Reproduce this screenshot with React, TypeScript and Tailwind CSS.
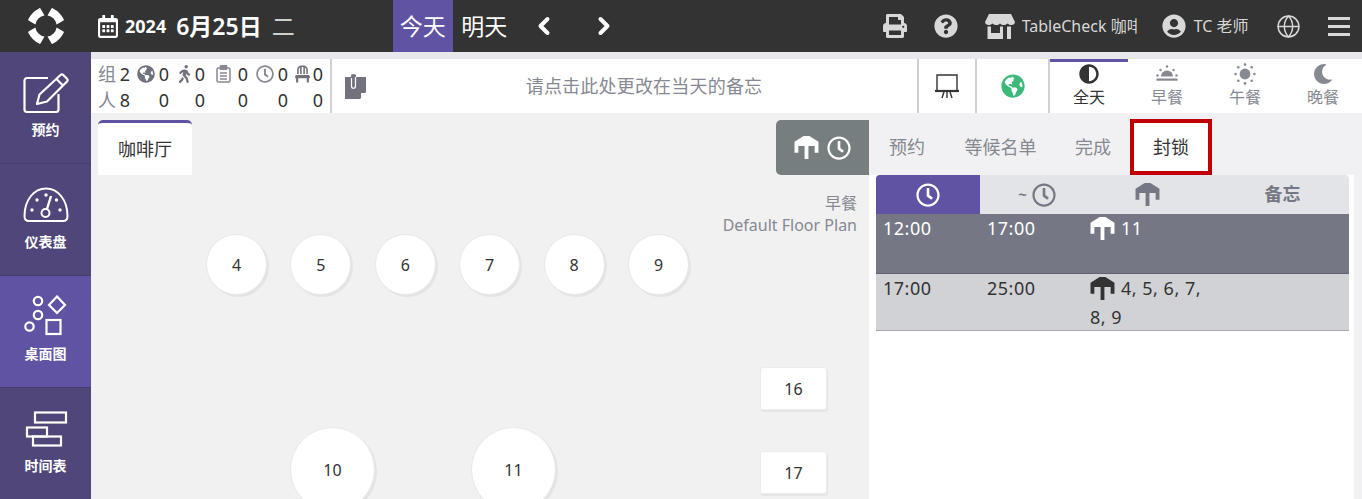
import { FaPrint, FaQuestionCircle, FaUserCircle, FaGlobeAmericas, FaWalking, FaChair, FaRegClock, FaMoon, FaAdjust, FaRegCalendarAlt } from "react-icons/fa";
import { FiGlobe, FiChevronLeft, FiChevronRight } from "react-icons/fi";

const font = { fontFamily: '"Noto Sans", "Noto Sans CJK SC", sans-serif' };

function Logo() {
  const seg = "M13.5 1.5 L17.5 8.4 A10.8 10.8 0 0 0 8.4 17.5 L1.5 13.5 Q0.8 13 1.4 12 Q5 5 12 1.4 Q13 0.8 13.5 1.5 Z";
  return (
    <svg width="38" height="38" viewBox="0 0 38 38" fill="#fff">
      <path d={seg} />
      <path d={seg} transform="translate(38 0) scale(-1 1)" />
      <path d={seg} transform="translate(0 38) scale(1 -1)" />
      <path d={seg} transform="translate(38 38) scale(-1 -1)" />
    </svg>
  );
}

function TableIcon({ className }: { className: string }) {
  return (
    <svg viewBox="0 0 26 24" className={className} fill="currentColor">
      <path d="M10 0 H16 L25.5 6 V17.5 H21.5 V10.5 H15 V24 H11 V10.5 H4.5 V17.5 H0.5 V6 Z" />
    </svg>
  );
}

function StoreIcon() {
  return (
    <svg width="30" height="25" viewBox="0 0 30 25" fill="#d8d8d8">
      <path d="M4 0 H26 L30 8 C30 10 28 11 26.5 11 C25 11 24 10.5 22.5 9.5 C21 10.5 20 11 18.7 11 C17.4 11 16 10.5 15 9.5 C14 10.5 12.6 11 11.3 11 C10 11 9 10.5 7.5 9.5 C6 10.5 5 11 3.5 11 C2 11 0 10 0 8 Z" />
      <path d="M2.5 12.5 H6 V19 H15 V12.5 H18 V25 H2.5 Z M22 12.5 H26 V25 H22 Z" />
    </svg>
  );
}

function EditIconNav() {
  return (
    <svg width="46" height="41" viewBox="0 0 46 41" fill="none" stroke="#fff" strokeWidth="2.2" strokeLinejoin="round">
      <path d="M25 5 H4 a2.5 2.5 0 0 0 -2.5 2.5 V36.5 a2.5 2.5 0 0 0 2.5 2.5 H33 a2.5 2.5 0 0 0 2.5 -2.5 V21" />
      <path d="M37.5 2 a2 2 0 0 1 2.8 0 L44 5.8 a2 2 0 0 1 0 2.8 L24 28.5 L14 31 L16.5 21.5 Z" />
      <path d="M33.5 6 L40 12.5" />
    </svg>
  );
}

function GaugeIcon() {
  return (
    <svg width="46" height="36" viewBox="0 0 46 36" fill="none" stroke="#fff" strokeWidth="2">
      <path d="M6 34 C3 34 1.5 32 1.5 29 C1.5 13 11 1.5 23 1.5 C35 1.5 44.5 13 44.5 29 C44.5 32 43 34 40 34 H6 Z" />
      <circle cx="22.5" cy="26" r="4" />
      <path d="M24 22 L28 9" strokeWidth="2.4" />
      <g fill="#fff" stroke="none">
        <circle cx="9" cy="23" r="1.7" /><circle cx="14" cy="13" r="1.7" /><circle cx="23" cy="8" r="1.7" /><circle cx="33.5" cy="13" r="1.7" /><circle cx="37" cy="23" r="1.7" />
      </g>
    </svg>
  );
}

function FloorIcon() {
  return (
    <svg width="44" height="44" viewBox="0 0 44 44" fill="none" stroke="#fff" strokeWidth="2.2">
      <circle cx="14" cy="6" r="4.2" />
      <circle cx="14" cy="20" r="4.2" />
      <circle cx="5.5" cy="31.5" r="4.2" />
      <path d="M33 1.5 L41 10 L33 18 L25 10 Z" />
      <rect x="22.5" y="25" width="14" height="14" />
    </svg>
  );
}

function ScheduleIcon() {
  return (
    <svg width="44" height="36" viewBox="0 0 44 36" fill="none" stroke="#fff" strokeWidth="2.2">
      <rect x="11" y="1.5" width="31" height="10" />
      <rect x="3" y="16.5" width="20" height="9" />
      <rect x="9" y="25.5" width="28" height="9" />
    </svg>
  );
}

function NavItem({ label, active, icon }: { label: string; active?: boolean; icon: React.ReactNode }) {
  return (
    <div className={`h-[112px] pb-[6px] flex flex-col items-center justify-center border-b border-[#453c6c] ${active ? "bg-[#6153a3]" : "bg-[#50467a]"}`}>
      <div className="h-[46px] flex items-center justify-center">{icon}</div>
      <div className="mt-[5px] text-[14px] leading-[18px] font-bold text-white">{label}</div>
    </div>
  );
}

function Stat({ w, icon, n }: { w: string; icon?: React.ReactNode; n: number }) {
  return (
    <div className={`${w} flex items-center justify-between`}>
      <span className="flex items-center">{icon}</span>
      <span>{n}</span>
    </div>
  );
}

function MealTab({ label, icon, active }: { label: string; icon: React.ReactNode; active?: boolean }) {
  return (
    <div className={`w-[78px] h-full flex flex-col items-center border-t-[3px] ${active ? "border-[#6153a3] text-[#333]" : "border-transparent text-[#868892]"}`}>
      <div className="h-[24px] flex items-center justify-center">{icon}</div>
      <div className="text-[16px] leading-[22px]">{label}</div>
    </div>
  );
}

function SunriseIcon() {
  return (
    <svg width="22" height="18" viewBox="0 0 22 18" fill="#868892">
      <path d="M5 11.5 A6 6 0 0 1 17 11.5 Z" />
      <rect x="0.5" y="13.5" width="21" height="2.2" />
      <circle cx="11" cy="1.5" r="1.2" /><circle cx="4.5" cy="5" r="1.2" /><circle cx="17.5" cy="5" r="1.2" /><circle cx="1.5" cy="10.5" r="1.2" /><circle cx="20.5" cy="10.5" r="1.2" />
    </svg>
  );
}

function SunIcon() {
  return (
    <svg width="22" height="22" viewBox="0 0 22 22" fill="#868892">
      <circle cx="11" cy="11" r="5.4" />
      <circle cx="11" cy="1.6" r="1.3" /><circle cx="11" cy="20.4" r="1.3" /><circle cx="1.6" cy="11" r="1.3" /><circle cx="20.4" cy="11" r="1.3" />
      <circle cx="4.3" cy="4.3" r="1.3" /><circle cx="17.7" cy="4.3" r="1.3" /><circle cx="4.3" cy="17.7" r="1.3" /><circle cx="17.7" cy="17.7" r="1.3" />
    </svg>
  );
}

function RoundTable({ n, size }: { n: number; size: "s" | "l" }) {
  return (
    <div className={`rounded-full bg-white border border-[#e8e8e8] shadow-[2px_2px_0_#e4e4e4] flex items-center justify-center text-[16px] text-[#333] ${size === "s" ? "w-[61px] h-[61px]" : "w-[85px] h-[85px]"}`}>
      {n}
    </div>
  );
}

function SquareTable({ n, cls }: { n: number; cls: string }) {
  return (
    <div className={`absolute left-[669px] w-[67px] h-[43px] rounded-[3px] bg-white border border-[#ececec] shadow-[1px_2px_0_#e6e6e6] flex items-center justify-center text-[16px] text-[#333] ${cls}`}>
      {n}
    </div>
  );
}

function Row({ from, to, tables, dark }: { from: string; to: string; tables: string; dark?: boolean }) {
  return (
    <div className={`flex border-b pl-[7px] text-[18px] leading-[29px] tracking-[0.5px] ${dark ? "h-[60px] bg-[#757884] border-[#5f6270] text-white" : "h-[57px] bg-[#d1d2d6] border-[#a9aab0] text-[#333]"}`}>
      <div className="w-[104px]">{from}</div>
      <div className="w-[103px]">{to}</div>
      <div className="w-[116px]">
        <TableIcon className={`inline-block w-[25px] h-[23px] mr-[6px] -mt-[4px] ${dark ? "text-white" : "text-[#333]"}`} />
        {tables}
      </div>
    </div>
  );
}

export default function App() {
  return (
    <div style={font} className="w-[1362px] h-[499px] overflow-hidden bg-[#f1f1f3] text-[#333]">
      <header className="h-[52px] bg-[#333] flex items-center text-white">
        <div className="w-[91px] flex justify-center"><Logo /></div>
        <FaRegCalendarAlt className="ml-[7px] w-[20px] h-[23px]" />
        <span className="ml-[7px] text-[18px] font-bold">2024</span>
        <span className="ml-[10px] text-[23px] font-semibold">6月25日</span>
        <span className="ml-[10px] text-[23px] text-[#cfcfcf]">二</span>
        <div className="ml-[98px] w-[60px] h-full bg-[#6153a3] flex items-center justify-center text-[23px]">今天</div>
        <div className="w-[62px] pl-px h-full flex items-center justify-center text-[23px]">明天</div>
        <FiChevronLeft className="ml-[15px] w-[28px] h-[28px]" strokeWidth={3.4} />
        <FiChevronRight className="ml-[32px] w-[28px] h-[28px]" strokeWidth={3.4} />
        <FaPrint className="ml-[265px] w-[24px] h-[24px] text-[#d8d8d8]" />
        <FaQuestionCircle className="ml-[27px] w-[24px] h-[24px] text-[#d8d8d8]" />
        <div className="ml-[27px]"><StoreIcon /></div>
        <span className="ml-[7px] w-[115px] overflow-hidden whitespace-nowrap text-[16px] text-[#d8d8d8]">TableCheck 咖啡厅</span>
        <FaUserCircle className="ml-[25px] w-[24px] h-[24px] text-[#d8d8d8]" />
        <span className="ml-[8px] w-[58px] whitespace-nowrap text-[16px] text-[#d8d8d8]">TC 老师</span>
        <FiGlobe className="ml-[24px] w-[25px] h-[25px] text-[#d8d8d8]" strokeWidth={1.4} />
        <div className="ml-[27px] w-[22px] flex flex-col gap-[5px]">
          <div className="h-[3px] bg-[#d8d8d8]" /><div className="h-[3px] bg-[#d8d8d8]" /><div className="h-[3px] bg-[#d8d8d8]" />
        </div>
      </header>

      <div className="flex h-[447px]">
        <nav className="w-[91px] shrink-0">
          <NavItem label="预约" icon={<EditIconNav />} />
          <NavItem label="仪表盘" icon={<GaugeIcon />} />
          <NavItem label="桌面图" active icon={<FloorIcon />} />
          <NavItem label="时间表" icon={<ScheduleIcon />} />
        </nav>

        <main className="flex-1 flex flex-col min-w-0">
          <div className="h-[7px] bg-[#e8e8ec]" />
          <div className="h-[54px] bg-white flex">
            <div className="w-[241px] pl-[7px] pt-[2px] text-[18px] leading-[26px] text-[#333] border-r-[2px] border-[#cfd0d6] shrink-0">
              <div className="flex h-[26px]">
                <Stat w="w-[32px]" icon={<span className="text-[#868892]">组</span>} n={2} />
                <Stat w="w-[39px] pl-[7px]" icon={<FaGlobeAmericas className="w-[18px] h-[18px] text-[#71727d]" />} n={0} />
                <Stat w="w-[36px] pl-[8px]" icon={<FaWalking className="w-[15px] h-[18px] text-[#71727d]" />} n={0} />
                <Stat w="w-[43px] pl-[11px]" icon={<svg width="15" height="18" viewBox="0 0 15 18" fill="none" stroke="#868892" strokeWidth="1.5"><rect x="1" y="3" width="13" height="14" rx="1.5" /><rect x="4.5" y="0.8" width="6" height="3.4" fill="#868892" /><path d="M4 8 H11 M4 11 H11 M4 14 H11" /></svg>} n={0} />
                <Stat w="w-[40px] pl-[8px]" icon={<FaRegClock className="w-[18px] h-[18px] text-[#868892]" />} n={0} />
                <Stat w="w-[35px] pl-[7px]" icon={<FaChair className="w-[15px] h-[18px] text-[#71727d]" />} n={0} />
              </div>
              <div className="flex h-[26px]">
                <Stat w="w-[32px]" icon={<span className="text-[#868892]">人</span>} n={8} />
                <Stat w="w-[39px]" n={0} />
                <Stat w="w-[36px]" n={0} />
                <Stat w="w-[43px]" n={0} />
                <Stat w="w-[40px]" n={0} />
                <Stat w="w-[35px]" n={0} />
              </div>
            </div>
            <div className="w-[587px] flex items-center pl-[13px] border-r-[2px] border-[#cfd0d6] shrink-0">
              <svg width="21" height="25" viewBox="0 0 21 25" fill="#71727d" className="shrink-0">
                <path d="M0 3 H6 V1 C6 0 11 0 11 1 V3 H21 V18 L15 25 H0 Z" />
                <path d="M16 24 V19 H21 Z" fill="#fff" />
                <path d="M6.5 4 V12 C6.5 15 10.5 15 10.5 12 V3" fill="none" stroke="#fff" strokeWidth="1.2" />
              </svg>
              <div className="flex-1 text-center text-[18px] tracking-[0.2px] text-[#868892] pl-[5px]">请点击此处更改在当天的备忘</div>
            </div>
            <div className="w-[58px] flex items-center justify-center border-r-[2px] border-[#cfd0d6] shrink-0">
              <svg width="24" height="25" viewBox="0 0 24 25" fill="none" stroke="#333" strokeWidth="1.4">
                <path d="M2 16 V1 H22 V16" />
                <path d="M0 17 H24" strokeWidth="2.2" />
                <path d="M7 24 L9 18 M12 24 V18 M17 24 L15 18" />
              </svg>
            </div>
            <div className="w-[73px] flex items-center justify-center border-r-[2px] border-[#cfd0d6] shrink-0">
              <FaGlobeAmericas className="w-[24px] h-[24px] text-[#3cb878]" />
            </div>
            <div className="flex h-full">
              <MealTab label="全天" active icon={<FaAdjust className="w-[20px] h-[20px] text-[#333]" />} />
              <MealTab label="早餐" icon={<SunriseIcon />} />
              <MealTab label="午餐" icon={<SunIcon />} />
              <MealTab label="晚餐" icon={<FaMoon className="w-[20px] h-[20px]" />} />
            </div>
          </div>

          <div className="flex-1 flex min-h-0">
            <div className="w-[778px] shrink-0 relative bg-[#f1f1f1]">
              <div className="absolute left-[7px] top-[7px] w-[94px] h-[55px] bg-white rounded-t-[5px] border-t-[3px] border-[#6153a3] flex items-center justify-center text-[18px]">咖啡厅</div>
              <div className="absolute left-[685px] top-[7px] w-[93px] h-[55px] bg-[#777e7f] rounded-l-[5px] flex items-center justify-center gap-[8px] text-white">
                <TableIcon className="w-[25px] h-[23px]" />
                <FaRegClock className="w-[24px] h-[24px]" />
              </div>
              <div className="absolute right-[12px] top-[79px] text-right text-[16px] leading-[22px] text-[#868892]">
                <div>早餐</div>
                <div>Default Floor Plan</div>
              </div>
              <div className="absolute left-[115px] top-[121px] flex gap-[23.4px]">
                {[4, 5, 6, 7, 8, 9].map((n) => <RoundTable key={n} n={n} size="s" />)}
              </div>
              <div className="absolute left-[199px] top-[314px] flex gap-[96px]">
                <RoundTable n={10} size="l" />
                <RoundTable n={11} size="l" />
              </div>
              <SquareTable n={16} cls="top-[254px]" />
              <SquareTable n={17} cls="top-[338px]" />
            </div>

            <div className="flex-1 flex flex-col min-w-0">
              <div className="h-[62px] flex items-end text-[18px] text-[#868892]">
                <div className="w-[76px] h-[55px] flex items-center justify-center">预约</div>
                <div className="w-[111px] h-[55px] flex items-center justify-center whitespace-nowrap">等候名单</div>
                <div className="w-[74px] h-[55px] flex items-center justify-center">完成</div>
                <div className="w-[82px] h-[56px] bg-white border-[4px] border-[#c00000] flex items-center justify-center text-[#333]">封锁</div>
              </div>
              <div className="flex-1 w-[485px] bg-white pl-[7px] pr-[5px]">
                <div className="h-[39px] bg-[#e3e4e7] rounded-t-[4px] overflow-hidden flex items-center text-[#757884]">
                  <div className="w-[104px] h-full bg-[#6153a3] flex items-center justify-center">
                    <FaRegClock className="w-[24px] h-[24px] text-white" />
                  </div>
                  <div className="w-[104px] pl-[10px] flex items-center justify-center gap-[5px] font-bold text-[15px]">~<FaRegClock className="w-[24px] h-[24px]" /></div>
                  <div className="w-[126px] flex items-center justify-center"><TableIcon className="w-[25px] h-[23px]" /></div>
                  <div className="flex-1 text-center font-bold text-[18px] pl-[6px]">备忘</div>
                </div>
                <Row from="12:00" to="17:00" tables="11" dark />
                <Row from="17:00" to="25:00" tables="4, 5, 6, 7, 8, 9" />
              </div>
            </div>
          </div>
        </main>
      </div>
    </div>
  );
}
